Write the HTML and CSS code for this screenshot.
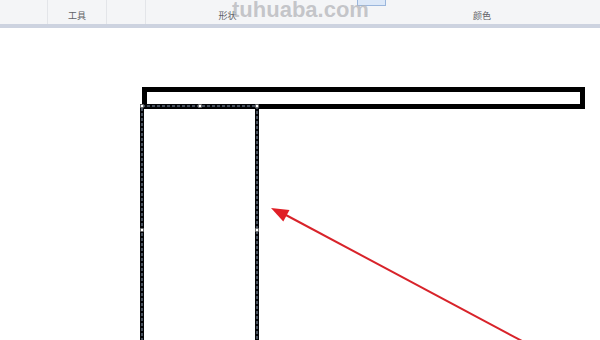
FILE: index.html
```html
<!DOCTYPE html>
<html>
<head>
<meta charset="utf-8">
<link rel="stylesheet" href="styles.css">
</head>
<body>
<div class="toolbar">
  <div class="group g1"></div>
  <div class="group g2"><span class="label">工具</span></div>
  <div class="group g3"></div>
  <div class="group g4"><span class="label">形状</span></div>
  <div class="group g5">
    <div class="swatch"></div>
    <span class="label">颜色</span>
  </div>
  <div class="watermark">tuhuaba.com</div>
</div>
<div class="canvas">
  <svg width="600" height="312" viewBox="0 0 600 312">
    <rect x="144.5" y="61.5" width="438" height="17" fill="none" stroke="#000" stroke-width="5"/>
    <rect x="142" y="78" width="115" height="300" fill="none" stroke="#050608" stroke-width="4"/>
    <rect x="142" y="78" width="115" height="300" fill="none" stroke="#8797b0" stroke-width="1" stroke-dasharray="3 2"/>
    <g fill="#fff" stroke="#555" stroke-width="0.6">
      <rect x="140.5" y="76.5" width="3" height="3"/>
      <rect x="198.5" y="76.5" width="3" height="3"/>
      <rect x="255.5" y="76.5" width="3" height="3"/>
      <rect x="140.5" y="200.5" width="3" height="3"/>
      <rect x="255.5" y="200.5" width="3" height="3"/>
    </g>
    <line x1="522" y1="313" x2="284" y2="186" stroke="#d8232a" stroke-width="2"/>
    <polygon points="271,180 289.5,182 283.3,193.5" fill="#e01f26"/>
  </svg>
</div>
</body>
</html>
```
FILE: styles.css
```css
html, body {
  margin: 0;
  padding: 0;
  background: #fff;
  overflow: hidden;
}
.toolbar {
  position: relative;
  display: flex;
  height: 24px;
  background: #f4f5f7;
  border-bottom: 4px solid #cdd3e0;
  overflow: hidden;
}
.group {
  display: flex;
  flex-direction: column;
  align-items: center;
  justify-content: flex-end;
  border-right: 1px solid #e3e5e9;
  box-sizing: border-box;
  flex: none;
}
.g1 { width: 48px; }
.g2 { width: 59px; }
.g3 { width: 39px; }
.g4 { width: 164px; border-right-color: transparent; }
.g5 { width: 344px; border-right: none; }
.label {
  font-family: "Noto Sans CJK SC", "Noto Sans", sans-serif;
  font-size: 9px;
  line-height: 12px;
  color: #5f6166;
  padding-bottom: 2px;
}
.swatch {
  align-self: flex-start;
  margin-left: 47px;
  width: 29px;
  height: 6px;
  background: #dce8f8;
  border: 1px solid #9ab6dc;
  border-top: none;
  box-sizing: border-box;
  margin-bottom: auto;
}
.watermark {
  position: absolute;
  left: 232px;
  top: -3px;
  font-family: "Liberation Sans", Arial, sans-serif;
  font-weight: bold;
  font-size: 22px;
  line-height: 26px;
  color: rgba(180, 182, 186, 0.75);
}
.canvas {
  height: 312px;
}
.canvas svg {
  display: block;
}
```
